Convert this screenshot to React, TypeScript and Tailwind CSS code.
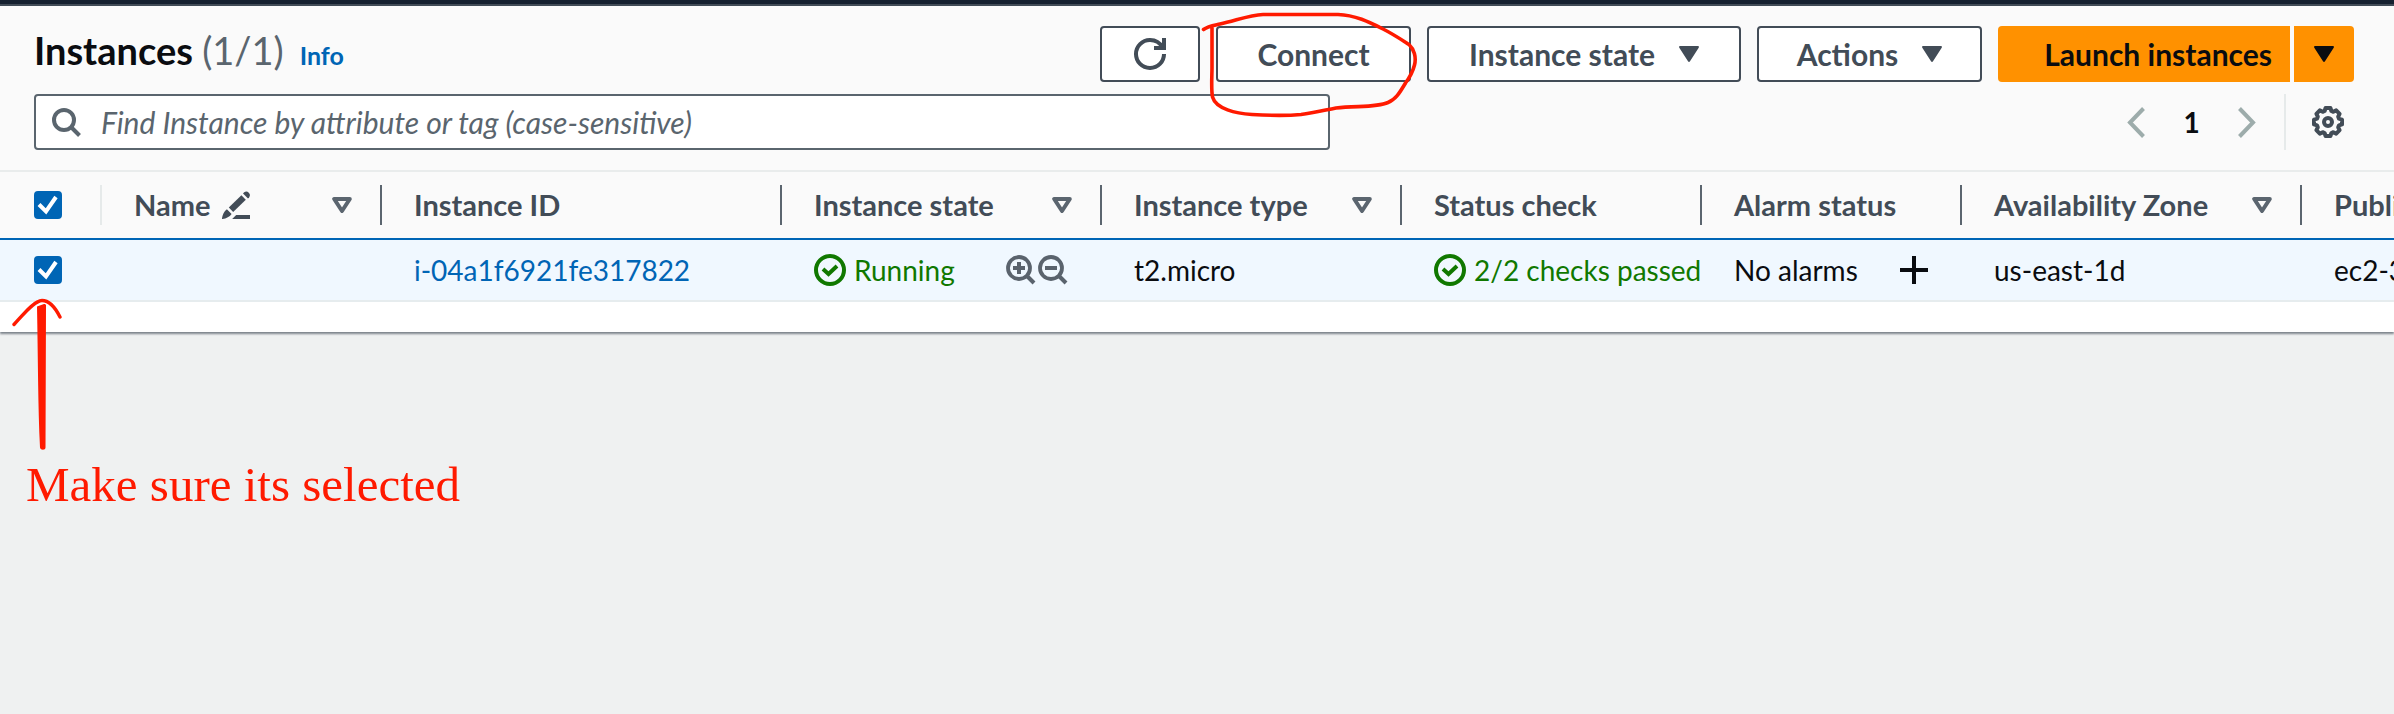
import { useState, type ReactNode } from 'react';

const columns: { label: string; width: string; sortable?: boolean; editable?: boolean }[] = [
  { label: 'Name', width: 'w-[280px]', sortable: true, editable: true },
  { label: 'Instance ID', width: 'w-[400px]' },
  { label: 'Instance state', width: 'w-[320px]', sortable: true },
  { label: 'Instance type', width: 'w-[300px]', sortable: true },
  { label: 'Status check', width: 'w-[300px]' },
  { label: 'Alarm status', width: 'w-[260px]' },
  { label: 'Availability Zone', width: 'w-[340px]', sortable: true },
  { label: 'Public IPv4 DNS', width: 'w-auto' },
];

function Caret() {
  return (
    <svg viewBox="0 0 20 16" className="h-4 w-5" fill="currentColor" aria-hidden="true">
      <path d="M1.2 0h17.6c1 0 1.5 1 .9 1.8L11 15.3c-.5.8-1.5.8-2 0L.3 1.8C-.3 1 .2 0 1.2 0z" />
    </svg>
  );
}

function SortIcon() {
  return (
    <svg viewBox="0 0 20 16" className="h-4 w-5" fill="none" stroke="#5b656f" strokeWidth="4" strokeLinejoin="round" aria-hidden="true">
      <path d="M2.2 2h15.6L10 14z" />
    </svg>
  );
}

function RefreshIcon() {
  return (
    <svg viewBox="0 0 16 16" className="size-8" fill="none" stroke="currentColor" strokeWidth="2" aria-hidden="true">
      <path d="M10 5h5V0" />
      <path d="M15 8a6.96 6.96 0 0 1-7 7 6.96 6.96 0 0 1-7-7 6.96 6.96 0 0 1 7-7 7 7 0 0 1 6.2 3.7" />
    </svg>
  );
}

function SearchIcon() {
  return (
    <svg viewBox="0 0 29 29" className="size-[29px] shrink-0" fill="none" stroke="#5a656e" strokeWidth="4" aria-hidden="true">
      <circle cx="12" cy="12" r="10" />
      <path d="m19 19 8.5 8.5" />
    </svg>
  );
}

function ZoomIcon({ plus }: { plus?: boolean }) {
  return (
    <svg viewBox="0 0 30 30" className="size-[30px]" fill="none" stroke="#5a636d" aria-hidden="true">
      <circle cx="13" cy="13" r="11" strokeWidth="3.8" />
      <path d="m21 21 7 7" strokeWidth="4" />
      <path d={plus ? 'M7 13h12M13 7v12' : 'M7 13h12'} strokeWidth="4" />
    </svg>
  );
}

function PencilIcon() {
  return (
    <svg viewBox="0 0 28 28" className="size-7" fill="#424c57" aria-hidden="true">
      <path d="M22.2 1.2a3.6 3.6 0 0 1 5 5l-1.2 1.3-5-5z" />
      <path d="m19.4 4.3 4.4 4.4L11.2 20.9l-4.4-4.3z" />
      <path d="m4.9 18.3 4.7 4.7c-2 2.8-5.2 4.5-9.1 5-.4 0-.6-.3-.5-.7.5-3.5 2-7 4.9-9z" />
      <path d="M14.2 24H28v4H10.2z" />
    </svg>
  );
}

function StatusIcon() {
  return (
    <svg viewBox="0 0 32 32" className="size-8 shrink-0" fill="none" stroke="currentColor" strokeWidth="4" aria-hidden="true">
      <circle cx="16" cy="16" r="14" />
      <path d="m9 15 5.5 5L23 12" />
    </svg>
  );
}

function PlusIcon() {
  return (
    <svg viewBox="0 0 28 28" className="size-7" fill="none" stroke="currentColor" strokeWidth="4" aria-hidden="true">
      <path d="M14 0v28M0 14h28" />
    </svg>
  );
}

function Chevron({ right }: { right?: boolean }) {
  return (
    <svg viewBox="0 0 18 31" className="h-[31px] w-[18px]" fill="none" stroke="#9dacab" strokeWidth="4" aria-hidden="true">
      <path d={right ? 'M1.5 1.5 15 15.5l-13.5 14' : 'M16.5 1.5 3 15.5l13.5 14'} />
    </svg>
  );
}

function GearIcon() {
  return (
    <svg viewBox="0 0 32 32" className="size-8" fill="none" stroke="#424c57" strokeWidth="4" aria-hidden="true">
      <path
        strokeLinejoin="round"
        d="M13.6 2h4.8l1 3 1.9.8 2.9-1.4 3.4 3.4-1.4 2.9.8 1.9 3 1v4.8l-3 1-.8 1.9 1.4 2.9-3.4 3.4-2.9-1.4-1.9.8-1 3h-4.8l-1-3-1.9-.8-2.9 1.4-3.4-3.4 1.4-2.9-.8-1.9-3-1v-4.8l3-1 .8-1.9-1.4-2.9 3.4-3.4 2.9 1.4 1.9-.8z"
      />
      <circle cx="16" cy="16" r="4" />
    </svg>
  );
}

function Checkbox({ label, checked, onChange }: { label: string; checked: boolean; onChange: () => void }) {
  return (
    <label className="relative block size-7">
      <input
        type="checkbox"
        aria-label={label}
        checked={checked}
        onChange={onChange}
        className="peer block size-7 appearance-none rounded-[4px] border-2 border-[#5b656f] bg-white checked:border-[#0065b5] checked:bg-[#0065b5]"
      />
      <svg viewBox="0 0 28 28" className="pointer-events-none absolute inset-0 hidden size-7 peer-checked:block" fill="none" stroke="#fff" strokeWidth="4" aria-hidden="true">
        <path d="m5 13.5 7 7L22 6" />
      </svg>
    </label>
  );
}

function Button({ children, className }: { children: ReactNode; className: string }) {
  return (
    <button
      type="button"
      className={`flex h-14 items-center justify-center rounded-[4px] border-2 border-[#424c57] bg-white text-[30px] leading-10 font-bold text-[#424c57] ${className}`}
    >
      {children}
    </button>
  );
}

function ConnectHighlight() {
  return (
    <svg viewBox="0 0 230 120" className="pointer-events-none absolute -top-5 -left-5 z-10 h-[120px] w-[230px]" fill="none" stroke="#ff1a00" strokeWidth="3.6" strokeLinecap="round" aria-hidden="true">
      <path d="M7.5 23.5C12 20 17 19.500 24 18 39 15 53 9 67 8.500H142C159 9 173 16 187 23 197 28 206 34 213 38.500 218 43 220.500 51 218.500 59 217 65 214 71 209.500 77 203 88 199 94 192 96.500 180 102 160 99.500 140 102 125 105 117 107 105 108.500 89 110 73 109.500 56 108.500 40 107.500 20 103 16.500 91 15 83 16 70 16 62V20" />
    </svg>
  );
}

function ArrowUp() {
  return (
    <svg viewBox="0 0 56 156" className="pointer-events-none h-[156px] w-14" aria-hidden="true">
      <path d="M25 8.500 32 6c1.500 0 2 .5 2 1.500l-.5 142c0 3-5 3-5.500 0C26 110 26 60 25 8.500z" fill="#ff1a00" />
      <path d="M2 26.500C10 18 22 2.500 30 2.500 38 2.500 44 11 48 19" fill="none" stroke="#ff1a00" strokeWidth="3.400" strokeLinecap="round" />
    </svg>
  );
}

export default function App() {
  const [selected, setSelected] = useState(true);
  const toggle = () => setSelected(!selected);

  return (
    <div className="min-h-screen overflow-hidden bg-[#eff1f1] font-[Lato,'Noto_Sans',sans-serif] text-[28px] leading-10 text-[#0a0c10]">
      <div className="h-1.5 border-b-2 border-[#414b56] bg-[#15202f]" />

      <section className="bg-white pb-[30px] shadow-[0_2px_2px_#7d848c]">
        <div className="border-b-2 border-[#e9ecec] bg-[#fafafa] pt-5 pr-10 pb-5 pl-[34px]">
          <header className="flex items-center justify-between">
            <div className="flex items-baseline pb-1">
              <h1 className="text-[38px] font-bold">
                Instances <span className="font-normal text-[#5a656e]">(1/1)</span>
              </h1>
              <a href="#info" className="ml-4 text-[25px] font-bold text-[#0065b5]">
                Info
              </a>
            </div>
            <div className="flex gap-4">
              <button type="button" aria-label="Refresh" className="flex h-14 w-[100px] items-center justify-center rounded-[4px] border-2 border-[#424c57] bg-white text-[#424c57]">
                <RefreshIcon />
              </button>
              <div className="relative">
                <Button className="w-[195px]">Connect</Button>
                <ConnectHighlight />
              </div>
              <Button className="w-[314px] gap-6">
                Instance state <Caret />
              </Button>
              <Button className="w-[225px] gap-6">
                Actions <Caret />
              </Button>
              <div className="flex gap-1">
                <button type="button" className="h-14 w-[292px] rounded-l-[4px] bg-[#ff9100] pr-[18px] text-right text-[30px] leading-10 font-bold">
                  Launch instances
                </button>
                <button type="button" aria-label="More launch options" className="flex h-14 w-[60px] items-center justify-center rounded-r-[4px] bg-[#ff9100]">
                  <Caret />
                </button>
              </div>
            </div>
          </header>

          <div className="mt-3 flex items-center justify-between">
            <label className="flex h-14 w-full max-w-[1296px] items-center gap-5 rounded-[4px] border-2 border-[#5a656e] bg-white px-4">
              <SearchIcon />
              <input
                type="search"
                aria-label="Find Instance"
                placeholder="Find Instance by attribute or tag (case-sensitive)"
                className="min-w-0 flex-1 bg-transparent text-[30px] italic outline-none placeholder:text-[#5a656e]"
              />
            </label>
            <div className="flex h-14 items-center">
              <button type="button" aria-label="Previous page">
                <Chevron />
              </button>
              <span className="w-[93px] text-center font-bold">1</span>
              <button type="button" aria-label="Next page">
                <Chevron right />
              </button>
              <span className="ml-7 h-full w-0.5 bg-[#e6eaea]" />
              <button type="button" aria-label="Preferences" className="mr-2.5 ml-[26px]">
                <GearIcon />
              </button>
            </div>
          </div>
        </div>

        <table className="w-full table-fixed border-collapse text-left whitespace-nowrap">
          <thead className="bg-[#fafafa]">
            <tr className="h-[67px] border-b-2 border-[#0065b5]">
              <th className="w-[102px] p-0">
                <div className="flex h-10 items-center border-r-2 border-[#e6eaea] pl-[34px]">
                  <Checkbox label="Select all instances" checked={selected} onChange={toggle} />
                </div>
              </th>
              {columns.map((col, i) => (
                <th key={col.label} className={`overflow-hidden p-0 text-[29px] font-bold text-[#424c57] ${col.width}`}>
                  <div className={`flex h-10 items-center justify-between pl-8 ${i < columns.length - 1 ? 'border-r-2 border-[#5b656f] pr-7' : ''}`}>
                    <span className="flex items-center gap-3">
                      {col.label}
                      {col.editable && <PencilIcon />}
                    </span>
                    {col.sortable && (
                      <button type="button" aria-label={`Sort by ${col.label}`}>
                        <SortIcon />
                      </button>
                    )}
                  </div>
                </th>
              ))}
            </tr>
          </thead>
          <tbody>
            <tr className="h-[62px] border-b-2 border-[#e6ecee] bg-[#f0f8ff]">
              <td className="p-0 pl-[34px]">
                <Checkbox label="Select instance i-04a1f6921fe317822" checked={selected} onChange={toggle} />
              </td>
              <td className="p-0" />
              <td className="p-0 pl-8">
                <a href="#instance" className="text-[#0065b5]">
                  i-04a1f6921fe317822
                </a>
              </td>
              <td className="p-0 pl-8">
                <div className="flex items-center">
                  <span className="flex w-[192px] items-center gap-2 text-[#107800]">
                    <StatusIcon /> Running
                  </span>
                  <span className="flex gap-0.5">
                    <button type="button" aria-label="Filter to this state">
                      <ZoomIcon plus />
                    </button>
                    <button type="button" aria-label="Exclude this state">
                      <ZoomIcon />
                    </button>
                  </span>
                </div>
              </td>
              <td className="p-0 pl-8">t2.micro</td>
              <td className="overflow-hidden p-0 pl-8">
                <span className="flex items-center gap-2 text-[#107800]">
                  <StatusIcon /> 2/2 checks passed
                </span>
              </td>
              <td className="p-0 pl-8">
                <div className="flex items-center">
                  <span className="w-[166px]">No alarms</span>
                  <button type="button" aria-label="Create alarm">
                    <PlusIcon />
                  </button>
                </div>
              </td>
              <td className="p-0 pl-8">us-east-1d</td>
              <td className="overflow-hidden p-0 pl-8">ec2-3-</td>
            </tr>
          </tbody>
        </table>
      </section>

      <aside className="relative -mt-[34px] pl-3 text-[#ff1a00]">
        <ArrowUp />
        <p className="pl-[14px] font-['Liberation_Serif',serif] text-[49px] leading-[62px]">Make sure its selected</p>
      </aside>
    </div>
  );
}
